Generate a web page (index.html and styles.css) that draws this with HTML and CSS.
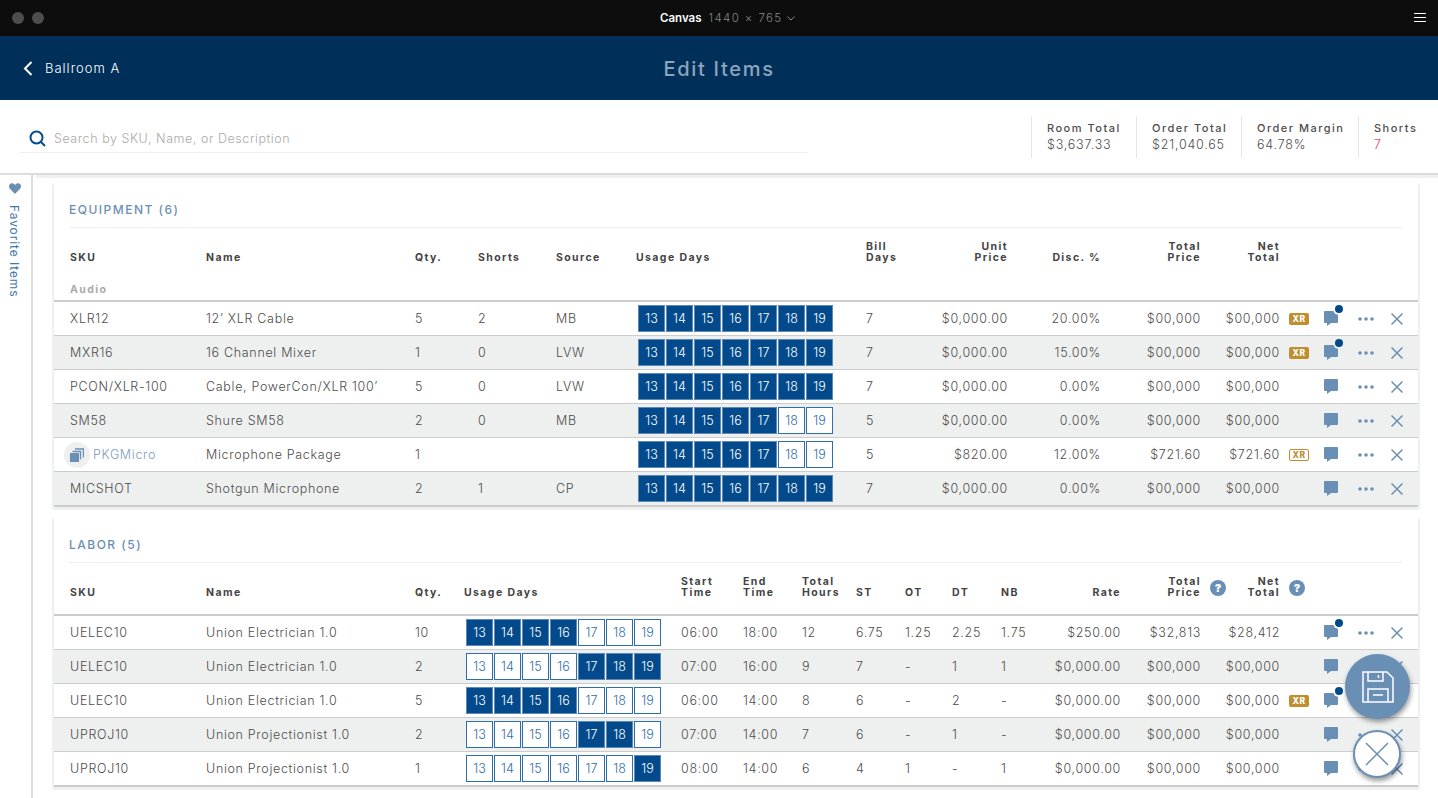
FILE: index.html
```html
<!DOCTYPE html>
<html lang="en">
<head>
  <meta charset="UTF-8">
  <title>Edit Items</title>
  <link rel="stylesheet" href="styles.css">
</head>
<body>
  <svg class="defs" width="0" height="0">
    <symbol id="bubble" viewBox="0 0 14 15"><path d="M1 0h12a1 1 0 0 1 1 1v10a1 1 0 0 1-1 1H7l-4 3v-3H1a1 1 0 0 1-1-1V1a1 1 0 0 1 1-1z"/></symbol>
    <symbol id="more" viewBox="0 0 16 4"><circle cx="2" cy="2" r="1.8"/><circle cx="8" cy="2" r="1.8"/><circle cx="14" cy="2" r="1.8"/></symbol>
    <symbol id="close" viewBox="0 0 12 12"><path d="M.5.5l11 11M11.5.5l-11 11" fill="none" stroke="currentColor" stroke-width="1.5"/></symbol>
  </svg>

  <div class="topbar">
    <span class="dot"></span><span class="dot"></span>
    <div class="canvas-name"><b>Canvas</b><span>1440 × 765</span>
      <svg width="8" height="5" viewBox="0 0 8 5"><path d="M.5.5L4 4 7.5.5" fill="none" stroke="#888"/></svg>
    </div>
    <svg class="burger" width="12" height="10" viewBox="0 0 12 10"><path d="M0 .5h12M0 4.5h12M0 8.5h12" stroke="#fff"/></svg>
  </div>

  <header class="header">
    <a class="back">
      <svg width="10" height="15" viewBox="0 0 10 15"><path d="M8.5 1L2 7.5 8.5 14" fill="none" stroke="#fff" stroke-width="2"/></svg>
      Ballroom A
    </a>
    <h1>Edit Items</h1>
  </header>

  <div class="searchbar">
    <div class="search">
      <svg width="17" height="17" viewBox="0 0 17 17"><circle cx="7.5" cy="7.5" r="6" fill="none" stroke="#034a8c" stroke-width="2"/><path d="M12 12l4 4" stroke="#034a8c" stroke-width="2"/></svg>
      <span>Search by SKU, Name, or Description</span>
    </div>
    <div class="stats">
      <div class="stat stat-room"><label>Room Total</label><span>$3,637.33</span></div>
      <div class="stat stat-order"><label>Order Total</label><span>$21,040.65</span></div>
      <div class="stat stat-margin"><label>Order Margin</label><span>64.78%</span></div>
      <div class="stat"><label>Shorts</label><span class="red">7</span></div>
    </div>
  </div>

  <div class="main">
    <aside class="sidebar">
      <svg width="12" height="11" viewBox="0 0 12 11"><path d="M6 11L.9 5.7C-.4 4.2-.2 2 1 .9 2.400-.2 4.500 0 6 2 7.500 0 9.600-.2 11 .9c1.200 1.100 1.400 3.300.1 4.800z" fill="#6a8fb4"/></svg>
      <span>Favorite Items</span>
    </aside>

    <div class="content">
      <section class="card">
        <h2>EQUIPMENT (6)</h2>
        <table class="equip">
          <colgroup>
            <col class="c-sku"><col class="c-name"><col style="width:63px"><col style="width:78px"><col style="width:80px"><col style="width:230px"><col style="width:62px"><col style="width:80px"><col style="width:93px"><col style="width:100px"><col style="width:79px"><col class="c-xr"><col class="c-msg"><col class="c-more"><col class="c-x">
          </colgroup>
          <thead>
            <tr>
              <th class="first">SKU</th><th>Name</th><th>Qty.</th><th>Shorts</th><th>Source</th><th>Usage Days</th><th>Bill<br>Days</th><th class="r">Unit<br>Price</th><th class="r">Disc. %</th><th class="r">Total<br>Price</th><th class="r">Net<br>Total</th><th colspan="4"></th>
            </tr>
            <tr class="group"><th class="first" colspan="15">Audio</th></tr>
          </thead>
          <tbody>
            <tr>
              <td class="first">XLR12</td><td>12’ XLR Cable</td><td>5</td><td>2</td><td>MB</td>
              <td><div class="days"><i class="on">13</i><i class="on">14</i><i class="on">15</i><i class="on">16</i><i class="on">17</i><i class="on">18</i><i class="on">19</i></div></td>
              <td>7</td><td class="r">$0,000.00</td><td class="r">20.00%</td><td class="r">$00,000</td><td class="r">$00,000</td>
              <td><span class="xr">XR</span></td>
              <td><span class="msg has-new"><svg><use href="#bubble"/></svg></span></td>
              <td><svg class="more"><use href="#more"/></svg></td><td><svg class="x"><use href="#close"/></svg></td>
            </tr>
            <tr>
              <td class="first">MXR16</td><td>16 Channel Mixer</td><td>1</td><td>0</td><td>LVW</td>
              <td><div class="days"><i class="on">13</i><i class="on">14</i><i class="on">15</i><i class="on">16</i><i class="on">17</i><i class="on">18</i><i class="on">19</i></div></td>
              <td>7</td><td class="r">$0,000.00</td><td class="r">15.00%</td><td class="r">$00,000</td><td class="r">$00,000</td>
              <td><span class="xr">XR</span></td>
              <td><span class="msg has-new"><svg><use href="#bubble"/></svg></span></td>
              <td><svg class="more"><use href="#more"/></svg></td><td><svg class="x"><use href="#close"/></svg></td>
            </tr>
            <tr>
              <td class="first">PCON/XLR-100</td><td>Cable, PowerCon/XLR 100’</td><td>5</td><td>0</td><td>LVW</td>
              <td><div class="days"><i class="on">13</i><i class="on">14</i><i class="on">15</i><i class="on">16</i><i class="on">17</i><i class="on">18</i><i class="on">19</i></div></td>
              <td>7</td><td class="r">$0,000.00</td><td class="r">0.00%</td><td class="r">$00,000</td><td class="r">$00,000</td>
              <td></td>
              <td><span class="msg"><svg><use href="#bubble"/></svg></span></td>
              <td><svg class="more"><use href="#more"/></svg></td><td><svg class="x"><use href="#close"/></svg></td>
            </tr>
            <tr>
              <td class="first">SM58</td><td>Shure SM58</td><td>2</td><td>0</td><td>MB</td>
              <td><div class="days"><i class="on">13</i><i class="on">14</i><i class="on">15</i><i class="on">16</i><i class="on">17</i><i>18</i><i>19</i></div></td>
              <td>5</td><td class="r">$0,000.00</td><td class="r">0.00%</td><td class="r">$00,000</td><td class="r">$00,000</td>
              <td></td>
              <td><span class="msg"><svg><use href="#bubble"/></svg></span></td>
              <td><svg class="more"><use href="#more"/></svg></td><td><svg class="x"><use href="#close"/></svg></td>
            </tr>
            <tr>
              <td class="pkg">
                <div class="pkg-wrap">
                  <span class="pkg-icon"><svg width="14" height="14" viewBox="0 0 14 14"><path d="M0 5h9v9H0z" fill="#6a8fb4"/><path d="M2.500 3.500h8v8M5 1h8.500v8.500" fill="none" stroke="#6a8fb4" stroke-width="1.400"/></svg></span>
                  <a>PKGMicro</a>
                </div>
              </td>
              <td>Microphone Package</td><td>1</td><td></td><td></td>
              <td><div class="days"><i class="on">13</i><i class="on">14</i><i class="on">15</i><i class="on">16</i><i class="on">17</i><i>18</i><i>19</i></div></td>
              <td>5</td><td class="r">$820.00</td><td class="r">12.00%</td><td class="r">$721.60</td><td class="r">$721.60</td>
              <td><span class="xr xr-line">XR</span></td>
              <td><span class="msg"><svg><use href="#bubble"/></svg></span></td>
              <td><svg class="more"><use href="#more"/></svg></td><td><svg class="x"><use href="#close"/></svg></td>
            </tr>
            <tr>
              <td class="first">MICSHOT</td><td>Shotgun Microphone</td><td>2</td><td>1</td><td>CP</td>
              <td><div class="days"><i class="on">13</i><i class="on">14</i><i class="on">15</i><i class="on">16</i><i class="on">17</i><i class="on">18</i><i class="on">19</i></div></td>
              <td>7</td><td class="r">$0,000.00</td><td class="r">0.00%</td><td class="r">$00,000</td><td class="r">$00,000</td>
              <td></td>
              <td><span class="msg"><svg><use href="#bubble"/></svg></span></td>
              <td><svg class="more"><use href="#more"/></svg></td><td><svg class="x"><use href="#close"/></svg></td>
            </tr>
          </tbody>
        </table>
      </section>

      <section class="card">
        <h2>LABOR (5)</h2>
        <table class="labor">
          <colgroup>
            <col class="c-sku"><col class="c-name"><col style="width:49px"><col style="width:217px"><col style="width:62px"><col style="width:59px"><col style="width:54px"><col style="width:49px"><col style="width:47px"><col style="width:49px"><col style="width:49px"><col style="width:71px"><col style="width:80px"><col style="width:79px"><col class="c-xr"><col class="c-msg"><col class="c-more"><col class="c-x">
          </colgroup>
          <thead>
            <tr>
              <th class="first">SKU</th><th>Name</th><th>Qty.</th><th>Usage Days</th><th>Start<br>Time</th><th>End<br>Time</th><th>Total<br>Hours</th><th>ST</th><th>OT</th><th>DT</th><th>NB</th><th class="r">Rate</th>
              <th class="r"><span class="with-help">Total<br>Price<b class="help">?</b></span></th>
              <th class="r"><span class="with-help">Net<br>Total<b class="help">?</b></span></th>
              <th colspan="4"></th>
            </tr>
          </thead>
          <tbody>
            <tr>
              <td class="first">UELEC10</td><td>Union Electrician 1.0</td><td>10</td>
              <td><div class="days"><i class="on">13</i><i class="on">14</i><i class="on">15</i><i class="on">16</i><i>17</i><i>18</i><i>19</i></div></td>
              <td>06:00</td><td>18:00</td><td>12</td><td>6.75</td><td>1.25</td><td>2.25</td><td>1.75</td>
              <td class="r">$250.00</td><td class="r">$32,813</td><td class="r">$28,412</td>
              <td></td>
              <td><span class="msg has-new"><svg><use href="#bubble"/></svg></span></td>
              <td><svg class="more"><use href="#more"/></svg></td><td><svg class="x"><use href="#close"/></svg></td>
            </tr>
            <tr>
              <td class="first">UELEC10</td><td>Union Electrician 1.0</td><td>2</td>
              <td><div class="days"><i>13</i><i>14</i><i>15</i><i>16</i><i class="on">17</i><i class="on">18</i><i class="on">19</i></div></td>
              <td>07:00</td><td>16:00</td><td>9</td><td>7</td><td>-</td><td>1</td><td>1</td>
              <td class="r">$0,000.00</td><td class="r">$00,000</td><td class="r">$00,000</td>
              <td></td>
              <td><span class="msg"><svg><use href="#bubble"/></svg></span></td>
              <td><svg class="more"><use href="#more"/></svg></td><td><svg class="x"><use href="#close"/></svg></td>
            </tr>
            <tr>
              <td class="first">UELEC10</td><td>Union Electrician 1.0</td><td>5</td>
              <td><div class="days"><i class="on">13</i><i class="on">14</i><i class="on">15</i><i class="on">16</i><i>17</i><i>18</i><i>19</i></div></td>
              <td>06:00</td><td>14:00</td><td>8</td><td>6</td><td>-</td><td>2</td><td>-</td>
              <td class="r">$0,000.00</td><td class="r">$00,000</td><td class="r">$00,000</td>
              <td><span class="xr">XR</span></td>
              <td><span class="msg has-new"><svg><use href="#bubble"/></svg></span></td>
              <td><svg class="more"><use href="#more"/></svg></td><td><svg class="x"><use href="#close"/></svg></td>
            </tr>
            <tr>
              <td class="first">UPROJ10</td><td>Union Projectionist 1.0</td><td>2</td>
              <td><div class="days"><i>13</i><i>14</i><i>15</i><i>16</i><i class="on">17</i><i class="on">18</i><i>19</i></div></td>
              <td>07:00</td><td>14:00</td><td>7</td><td>6</td><td>-</td><td>1</td><td>-</td>
              <td class="r">$0,000.00</td><td class="r">$00,000</td><td class="r">$00,000</td>
              <td></td>
              <td><span class="msg"><svg><use href="#bubble"/></svg></span></td>
              <td><svg class="more"><use href="#more"/></svg></td><td><svg class="x"><use href="#close"/></svg></td>
            </tr>
            <tr>
              <td class="first">UPROJ10</td><td>Union Projectionist 1.0</td><td>1</td>
              <td><div class="days"><i>13</i><i>14</i><i>15</i><i>16</i><i>17</i><i>18</i><i class="on">19</i></div></td>
              <td>08:00</td><td>14:00</td><td>6</td><td>4</td><td>1</td><td>-</td><td>1</td>
              <td class="r">$0,000.00</td><td class="r">$00,000</td><td class="r">$00,000</td>
              <td></td>
              <td><span class="msg"><svg><use href="#bubble"/></svg></span></td>
              <td><svg class="more"><use href="#more"/></svg></td><td><svg class="x"><use href="#close"/></svg></td>
            </tr>
          </tbody>
        </table>
      </section>
    </div>
  </div>

  <button class="fab fab-save">
    <svg width="32" height="32" viewBox="0 0 32 32" fill="none" stroke="#fff" stroke-width="1.500"><path d="M1 1h24l6 6v24H1z"/><path d="M6 1v9h15V1M16.500 4v3M6 31V18h20v13M11 24h10"/></svg>
  </button>
  <button class="fab fab-close">
    <svg width="24" height="24" viewBox="0 0 24 24"><path d="M1 1l22 22M23 1L1 23" fill="none" stroke="#6a8fb4" stroke-width="1.500"/></svg>
  </button>
</body>
</html>
```

FILE: styles.css
```css
* {
  box-sizing: border-box;
}

html,
body {
  height: 798px;
  overflow: hidden;
}

body {
  margin: 0;
  font-family: Inter, "Liberation Sans", sans-serif;
  font-size: 12.5px;
  font-weight: 300;
  letter-spacing: 0.68px;
  color: #4d4d4d;
  background: #fff;
}

.defs {
  display: block;
  height: 0;
}

.topbar {
  height: 36px;
  background: #0d0d0d;
  display: flex;
  align-items: center;
  gap: 8px;
  padding: 0 12px;
}

.dot {
  width: 12px;
  height: 12px;
  border-radius: 50%;
  background: #4d4d4d;
}

.canvas-name {
  margin-left: 608px;
  display: flex;
  align-items: center;
  font-size: 11.5px;
  letter-spacing: 1.4px;
  color: #888;
}

.canvas-name b {
  color: #fff;
  font-weight: 600;
  margin-right: 7px;
  letter-spacing: 0;
}

.canvas-name svg {
  margin-left: 4px;
}

.burger {
  margin-left: auto;
}

.header {
  height: 64px;
  background: #00305a;
  color: #fff;
  display: flex;
  align-items: center;
  justify-content: center;
  position: relative;
}

.header h1 {
  margin: 2px 0 0;
  font-size: 20px;
  font-weight: 500;
  letter-spacing: 1.7px;
  color: #8ea4ba;
}

.back {
  position: absolute;
  left: 23px;
  top: 24px;
  display: flex;
  align-items: center;
  gap: 12px;
  font-size: 13px;
  font-weight: 300;
  letter-spacing: 1px;
}

.searchbar {
  height: 75px;
  border-bottom: 2px solid #ddd;
  display: flex;
  justify-content: space-between;
  padding: 16px 0 15px 19px;
}

.search {
  width: 788px;
  height: 37px;
  border-bottom: 1px solid #eee;
  display: flex;
  align-items: center;
  gap: 8px;
  padding: 8px 0 0 10px;
  color: #aaa;
  font-size: 12.500px;
  letter-spacing: 0.55px;
}

.stats {
  display: flex;
  height: 42px;
}

.stat {
  border-left: 1px solid #e6e6e6;
  padding: 5px 16px 0 15px;
  width: 105px;
  display: flex;
  flex-direction: column;
  gap: 2px;
  white-space: nowrap;
}

.stat-margin {
  width: 117px;
}

.stat:last-child {
  width: 80px;
}

.stat label {
  font-size: 11px;
  font-weight: 500;
  letter-spacing: 1.5px;
}

.stat span {
  font-size: 12.500px;
  letter-spacing: 0.8px;
}

.red {
  color: #e8475f;
}

.main {
  display: flex;
  height: 630px;
}

.sidebar {
  width: 33px;
  flex: none;
  border-right: 2px solid #ddd;
  padding: 8px 2px 0 0;
  display: flex;
  flex-direction: column;
  align-items: center;
  gap: 11px;
  color: #3f78ad;
  font-size: 12px;
  font-weight: 400;
  letter-spacing: 0.9px;
}

.sidebar span {
  writing-mode: vertical-rl;
}

.content {
  flex: 1;
  margin-left: 3px;
  border-top: 3px solid #f0f0f0;
  padding: 5px 17px 0 16px;
}

.card {
  width: 1368px;
  border: 2px solid #f0f0f0;
  border-top: 0;
  border-bottom-width: 3px;
  border-radius: 3px;
  margin-bottom: 8px;
  background: #fff;
  height: 327px;
}

.card + .card {
  height: 272px;
}

.card h2 {
  margin: 0 16px 0 15px;
  height: 45px;
  padding-top: 20px;
  border-bottom: 1px solid #eee;
  font-size: 12px;
  line-height: 14px;
  font-weight: 500;
  letter-spacing: 1.5px;
  color: #6a8fb4;
}

table {
  width: 1364px;
  table-layout: fixed;
  border-collapse: separate;
  border-spacing: 0;
}

.c-sku { width: 152px; }
.c-name { width: 209px; }
.c-xr { width: 44px; }
.c-msg { width: 34px; }
.c-more { width: 32px; }
.c-x { width: 28px; }

th {
  padding: 0 0 10px;
  height: 45px;
  vertical-align: bottom;
  text-align: left;
  font-size: 10.500px;
  line-height: 11px;
  font-weight: 700;
  letter-spacing: 1.4px;
  color: #444;
}

.labor th {
  height: 53px;
  padding-bottom: 16px;
  border-bottom: 2px solid #ccc;
}

.group th {
  height: 29px;
  padding-bottom: 5px;
  border-bottom: 2px solid #ccc;
  color: #aaa;
  padding-left: 17px;
}

th.first,
td.first {
  padding-left: 16px;
}

td {
  height: 34px;
  padding: 0;
  border-bottom: 1px solid #ccc;
  white-space: nowrap;
}

tbody tr:nth-child(even) td {
  background: #eef0ef;
}

tbody tr:last-child td {
  height: 35px;
  border-bottom: 2px solid #ccc;
}

.r {
  text-align: right;
}

td svg {
  display: block;
}

.days {
  display: flex;
  gap: 1px;
  margin-left: 2px;
}

.days i {
  width: 27px;
  height: 27px;
  border: 1px solid #2f6fa8;
  background: #fff;
  color: #2f6fa8;
  font-style: normal;
  text-align: center;
  line-height: 25px;
  letter-spacing: 0;
}

.days i.on {
  background: #034a8c;
  border-color: #5d8ab4;
  color: #fff;
}

.xr {
  display: block;
  width: 20px;
  height: 12px;
  margin-left: 9px;
  border-radius: 2px;
  background: #c08e2f;
  color: #fff;
  font-size: 8.500px;
  line-height: 12px;
  font-weight: 800;
  letter-spacing: 0.5px;
  text-align: center;
}

.xr-line {
  background: #fff;
  border: 1px solid #c08e2f;
  color: #c08e2f;
  line-height: 10px;
}

.msg {
  display: block;
  position: relative;
  width: 14px;
  height: 15px;
  fill: #6a8fb4;
}

.msg svg {
  width: 14px;
  height: 15px;
}

.has-new::after {
  content: "";
  position: absolute;
  right: -5px;
  top: -6px;
  width: 8px;
  height: 8px;
  border-radius: 50%;
  background: #034a8c;
  box-shadow: 0 0 0 2px #fff;
}

tbody tr:nth-child(even) .has-new::after {
  box-shadow: 0 0 0 2px #eef0ef;
}

.more {
  width: 16px;
  height: 4px;
  fill: #6a8fb4;
}

.x {
  width: 12px;
  height: 12px;
  margin-left: 1px;
  color: #6a8fb4;
}

.pkg-wrap {
  display: flex;
  align-items: center;
  gap: 3px;
  padding-left: 10px;
}

.pkg-icon {
  width: 26px;
  height: 26px;
  border-radius: 50%;
  background: #eef0ef;
  display: flex;
  align-items: center;
  justify-content: center;
}

.pkg-wrap a {
  color: #7d9dbd;
}

.with-help {
  position: relative;
  display: inline-block;
}

.help {
  position: absolute;
  left: 100%;
  top: 4px;
  margin-left: 9px;
  width: 16px;
  height: 16px;
  border-radius: 50%;
  background: #6a8fb4;
  color: #fff;
  font-size: 11px;
  line-height: 16px;
  text-align: center;
  letter-spacing: 0;
}

.fab {
  position: fixed;
  padding: 0;
  border-radius: 50%;
  display: flex;
  align-items: center;
  justify-content: center;
  box-shadow: 1px 3px 5px rgba(0, 0, 0, 0.4);
}

.fab-save {
  left: 1345px;
  top: 654px;
  width: 65px;
  height: 65px;
  border: 0;
  background: #6a8fb4;
}

.fab-close {
  left: 1353px;
  top: 730px;
  width: 48px;
  height: 48px;
  border: 2px solid #6a8fb4;
  background: #fff;
}
```
